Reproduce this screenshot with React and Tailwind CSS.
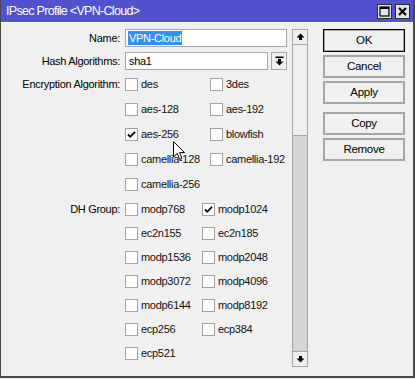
import React from "react";

const font = "font-['Liberation_Sans',Arial,sans-serif]";

function Check({ checked }) {
  return (
    <div className="w-[13px] h-[13px] border border-[#a3a3a3] bg-white flex items-center justify-center shrink-0">
      {checked && (
        <svg width="11" height="11" viewBox="0 0 11 11">
          <path d="M2 5.5 L4.3 7.8 L9 2.8" stroke="#000" strokeWidth="1.8" fill="none" />
        </svg>
      )}
    </div>
  );
}

function Opt({ label, checked, w }) {
  if (!label) return null;
  return (
    <div className={`flex items-center gap-[3px] ${w}`}>
      <Check checked={checked} />
      <span className="text-[11px] tracking-[-0.3px] text-[#111] leading-none">{label}</span>
    </div>
  );
}

function Btn({ children, primary, className = "" }) {
  return (
    <div
      className={`h-[23px] w-[82px] flex items-center justify-center bg-[#f0f0f0] text-[11.5px] tracking-[-0.3px] text-black ${
        primary ? "border border-black shadow-[inset_0_0_0_1px_#a8a8a8]" : "border-2 border-[#a6a6a6]"
      } ${className}`}
    >
      {children}
    </div>
  );
}

const enc = [
  ["des", "3des"],
  ["aes-128", "aes-192"],
  ["aes-256", "blowfish"],
  ["camellia-128", "camellia-192"],
  ["camellia-256", null],
];
const dh = [
  ["modp768", "modp1024"],
  ["ec2n155", "ec2n185"],
  ["modp1536", "modp2048"],
  ["modp3072", "modp4096"],
  ["modp6144", "modp8192"],
  ["ecp256", "ecp384"],
  ["ecp521", null],
];
const checkedSet = new Set(["aes-256", "modp1024"]);

function UpArrow() {
  return (
    <svg width="9" height="8" viewBox="0 0 9 8">
      <polygon points="4.5,0.5 8.5,4.5 6,4.5 6,7 3,7 3,4.5 0.5,4.5" fill="#000" />
    </svg>
  );
}
function DownArrow() {
  return (
    <svg width="9" height="8" viewBox="0 0 9 8">
      <polygon points="3,1 6,1 6,3.5 8.5,3.5 4.5,7.5 0.5,3.5 3,3.5" fill="#000" />
    </svg>
  );
}
function DropArrow() {
  return (
    <svg width="9" height="10" viewBox="0 0 9 10">
      <rect x="0.5" y="0.5" width="8" height="1.6" fill="#000" />
      <polygon points="3,3 6,3 6,5.5 8.5,5.5 4.5,9.5 0.5,5.5 3,5.5" fill="#000" />
    </svg>
  );
}

export default function App() {
  return (
    <div className={`w-[415px] h-[379px] bg-[#f0f0f0] ${font} relative overflow-hidden`}>
      <div className="w-[415px] h-[378px] border-l border-r-2 border-b-2 border-[#4a4a4a] flex flex-col">
        {/* title bar */}
        <div className="h-[22px] bg-[#5053cd] flex items-center justify-between pl-[5px] pr-[3px] shrink-0">
          <span className="text-white text-[12.5px] tracking-[-0.7px] leading-none">IPsec Profile &lt;VPN-Cloud&gt;</span>
          <div className="flex gap-[3px] items-center">
            <div className="w-[15px] h-[15px] border border-[#2a2a2a] bg-[#e4e4e4] flex items-center justify-center">
              <svg width="11" height="11" viewBox="0 0 11 11">
                <rect x="1" y="1" width="9" height="9" fill="none" stroke="#000" strokeWidth="1.2" />
                <rect x="1" y="1" width="9" height="2" fill="#000" />
              </svg>
            </div>
            <div className="w-[15px] h-[15px] border border-[#2a2a2a] bg-[#e4e4e4] flex items-center justify-center">
              <svg width="9" height="9" viewBox="0 0 9 9">
                <path d="M1 1 L8 8 M8 1 L1 8" stroke="#000" strokeWidth="2.2" />
              </svg>
            </div>
          </div>
        </div>
        {/* body */}
        <div className="flex-1 border-t border-white flex pt-[6px]">
          {/* form */}
          <div className="w-[286px] flex flex-col text-[11px] tracking-[-0.3px] text-black">
            <div className="flex h-[18px] items-center">
              <div className="w-[119px] text-right leading-none">Name:</div>
              <div className="ml-[5px] w-[162px] h-[18px] border border-[#a6a6a6] bg-white flex items-center pl-[2px]">
                <span className="bg-[#3390f0] text-white leading-[14px] px-[1px]">VPN-Cloud</span>
              </div>
            </div>
            <div className="flex h-[18px] items-center mt-[5px]">
              <div className="w-[119px] text-right leading-none">Hash Algorithms:</div>
              <div className="ml-[5px] w-[143px] h-[18px] border border-[#a6a6a6] bg-white flex items-center pl-[3px] leading-none">
                sha1
              </div>
              <div className="ml-[3px] w-[16px] h-[18px] border border-[#a6a6a6] bg-[#f0f0f0] flex items-center justify-center">
                <DropArrow />
              </div>
            </div>
            <div className="mt-[2px] flex flex-col">
              {enc.map((r, i) => (
                <div key={i} className="flex h-[25px] items-center">
                  <div className="w-[119px] text-right leading-none">{i === 0 ? "Encryption Algorithm:" : ""}</div>
                  <div className="ml-[5px] flex items-center">
                    <Opt label={r[0]} checked={checkedSet.has(r[0])} w="w-[85px]" />
                    <Opt label={r[1]} checked={checkedSet.has(r[1])} w="w-[77px]" />
                  </div>
                </div>
              ))}
            </div>
            <div className="flex flex-col">
              {dh.map((r, i) => (
                <div key={i} className="flex h-[24px] items-center">
                  <div className="w-[119px] text-right leading-none">{i === 0 ? "DH Group:" : ""}</div>
                  <div className="ml-[5px] flex items-center">
                    <Opt label={r[0]} checked={checkedSet.has(r[0])} w="w-[77px]" />
                    <Opt label={r[1]} checked={checkedSet.has(r[1])} w="w-[85px]" />
                  </div>
                </div>
              ))}
            </div>
          </div>
          {/* scrollbar */}
          <div className="ml-[5px] w-[16px] h-[338px] flex flex-col">
            <div className="h-[16px] border border-[#a6a6a6] bg-[#f0f0f0] flex items-center justify-center shrink-0">
              <UpArrow />
            </div>
            <div className="h-[91px] border-x border-b border-[#a6a6a6] bg-[#f0f0f0] shrink-0" />
            <div className="flex-1 border-x border-[#a6a6a6] bg-[#d6d6d6]" />
            <div className="h-[16px] border border-[#a6a6a6] bg-[#f0f0f0] flex items-center justify-center shrink-0">
              <DownArrow />
            </div>
          </div>
          {/* buttons */}
          <div className="ml-[15px] flex flex-col gap-[3px]">
            <Btn primary>OK</Btn>
            <Btn>Cancel</Btn>
            <Btn>Apply</Btn>
            <Btn className="mt-[5px]">Copy</Btn>
            <Btn>Remove</Btn>
          </div>
        </div>
      </div>
      {/* mouse cursor */}
      <svg className="absolute left-[173px] top-[141px]" width="13" height="20" viewBox="0 0 13 20">
        <path d="M0.5 0.5 L0.5 16 L4.2 12.4 L6.8 18.5 L9 17.5 L6.5 11.6 L11.5 11.6 Z" fill="#fff" stroke="#000" strokeWidth="1" strokeLinejoin="round" />
      </svg>
    </div>
  );
}
